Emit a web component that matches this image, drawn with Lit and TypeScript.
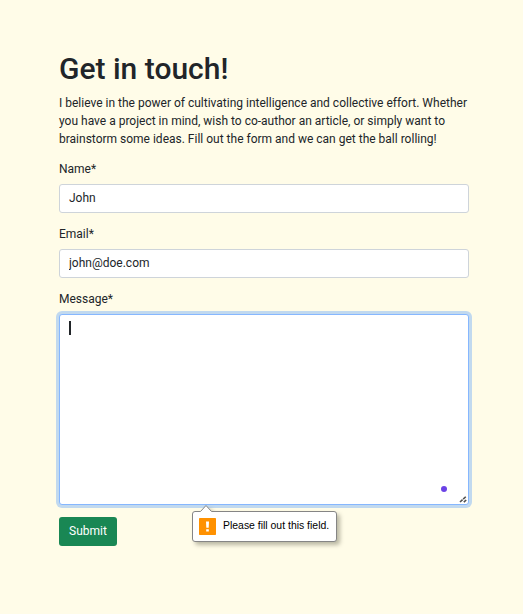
import { LitElement, html, css } from "lit";
import { customElement } from "lit/decorators.js";

@customElement("validation-bubble")
class ValidationBubble extends LitElement {
  static styles = css`
    :host {
      display: block;
      width: 145px;
      height: 38px;
    }
    svg {
      display: block;
      position: absolute;
      left: 0;
      top: 0;
      overflow: visible;
      filter: drop-shadow(3px 3px 2px rgba(80, 80, 60, 0.4));
    }
    .content {
      position: relative;
      box-sizing: border-box;
      display: flex;
      align-items: center;
      gap: 7px;
      height: 38px;
      padding: 7px 0 0 7px;
    }
    .mark {
      position: static;
      filter: none;
      flex: none;
    }
    .text {
      font: 10.45px/14px "Liberation Sans", Arial, sans-serif;
      color: #000;
      white-space: nowrap;
      margin-top: -1px;
    }
  `;
  render() {
    return html`
      <svg width="145" height="38" viewBox="0 0 145 38">
        <path
          d="M3 7.5H8.5L14 1.5L19.5 7.5H142Q144.500 7.500 144.500 10V35Q144.500 37.500 142 37.500H3Q.5 37.500 .5 35V10Q.5 7.500 3 7.500Z"
          fill="#fff" stroke="#858585"
        />
      </svg>
      <div class="content">
        <svg class="mark" width="17" height="17" viewBox="0 0 17 17">
          <rect width="17" height="17" rx=".7" fill="#ff9100" />
          <path d="M7 3.500H10L9.700 9.700H7.300ZM7.200 11.200H9.800V13.500H7.200Z" fill="#fff" />
        </svg>
        <span class="text">Please fill out this field.</span>
      </div>
    `;
  }
}

@customElement("app-root")
class AppRoot extends LitElement {
  static styles = css`
    :host {
      display: block;
      box-sizing: border-box;
      min-height: 614px;
      padding: 50px 54px 0 59px;
      background: #fffce8;
      color: #212529;
      font: 12px/18px Roboto, sans-serif;
    }
    h1 {
      margin: 0 0 6px;
      font-size: 30px;
      line-height: 38px;
      font-weight: 500;
      white-space: nowrap;
    }
    p {
      margin: 0 0 12px;
      white-space: nowrap;
    }
    form {
      display: flex;
      flex-direction: column;
      gap: 12px;
    }
    .field {
      display: flex;
      flex-direction: column;
      gap: 6px;
    }
    input,
    .area {
      box-sizing: border-box;
      width: 410px;
      border: 1px solid #ced4da;
      border-radius: 3px;
      background: #fff;
      outline: none;
    }
    input {
      height: 29px;
      margin: 0;
      padding: 0 9px 1px;
      font: inherit;
      color: inherit;
    }
    .area {
      position: relative;
      height: 191px;
      padding: 6px 9px;
      border-color: #86b7fe;
      box-shadow: 0 0 0 3px #c1d9ef;
    }
    .caret {
      width: 2px;
      height: 14px;
      background: #212529;
    }
    .dot {
      position: absolute;
      right: 21px;
      bottom: 12px;
      width: 6px;
      height: 6px;
      border-radius: 50%;
      background: #6b42e6;
    }
    .grip {
      position: absolute;
      right: 1px;
      bottom: 1px;
    }
    .actions {
      position: relative;
    }
    button {
      display: block;
      box-sizing: border-box;
      width: 58px;
      height: 29px;
      margin: 0;
      padding: 0 0 1px;
      border: 0;
      border-radius: 3px;
      background: #198754;
      color: #fff;
      font: inherit;
    }
    validation-bubble {
      position: absolute;
      left: 133px;
      top: -13px;
    }
  `;
  render() {
    return html`
      <h1>Get in touch!</h1>
      <p>
        I believe in the power of cultivating intelligence and collective effort. Whether<br />
        you have a project in mind, wish to co-author an article, or simply want to<br />
        brainstorm some ideas. Fill out the form and we can get the ball rolling!
      </p>
      <form>
        <div class="field">
          <label for="name">Name*</label>
          <input id="name" type="text" .value=${"John"} />
        </div>
        <div class="field">
          <label for="email">Email*</label>
          <input id="email" type="text" .value=${"john@doe.com"} />
        </div>
        <div class="field">
          <label>Message*</label>
          <div class="area" role="textbox" aria-label="Message">
            <div class="caret"></div>
            <span class="dot"></span>
            <svg class="grip" width="8" height="8" viewBox="0 0 8 8">
              <path d="M1 7L7 1.500M4.800 7.200L7.200 5" fill="none" stroke="#505050" stroke-width="1.600" stroke-dasharray="3.500 .8" />
            </svg>
          </div>
        </div>
        <div class="actions">
          <button type="button">Submit</button>
          <validation-bubble></validation-bubble>
        </div>
      </form>
    `;
  }
}
